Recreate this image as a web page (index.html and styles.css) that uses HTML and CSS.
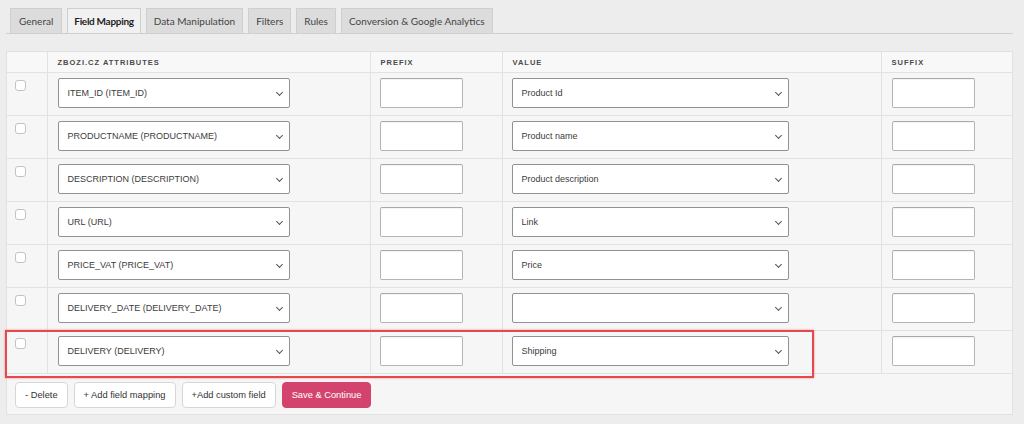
FILE: index.html
```html
<!DOCTYPE html>
<html lang="en">
<head>
    <meta charset="UTF-8">
    <meta name="viewport" content="width=device-width, initial-scale=1.0">
    <title>Field Mapping</title>
    <link rel="stylesheet" href="styles.css">
</head>
<body>

<div class="wrap">
    <!-- Tabs -->
    <ul class="tabs">
        <li class="first">General</li>
        <li class="active">Field Mapping</li>
        <li>Data Manipulation</li>
        <li>Filters</li>
        <li>Rules</li>
        <li>Conversion &amp; Google Analytics</li>
    </ul>

    <div class="panel">
        <table class="mapping">
            <colgroup>
                <col class="c-check">
                <col class="c-attr">
                <col class="c-prefix">
                <col class="c-value">
                <col>
            </colgroup>
            <thead>
                <tr>
                    <th></th>
                    <th>Zbozi.cz Attributes</th>
                    <th>Prefix</th>
                    <th>Value</th>
                    <th>Suffix</th>
                </tr>
            </thead>
            <tbody>
                <tr>
                    <td><input type="checkbox"></td>
                    <td><div class="select">ITEM_ID (ITEM_ID)</div></td>
                    <td><input type="text" class="small"></td>
                    <td><div class="select">Product Id</div></td>
                    <td><input type="text" class="small"></td>
                </tr>
                <tr>
                    <td><input type="checkbox"></td>
                    <td><div class="select">PRODUCTNAME (PRODUCTNAME)</div></td>
                    <td><input type="text" class="small"></td>
                    <td><div class="select">Product name</div></td>
                    <td><input type="text" class="small"></td>
                </tr>
                <tr>
                    <td><input type="checkbox"></td>
                    <td><div class="select">DESCRIPTION (DESCRIPTION)</div></td>
                    <td><input type="text" class="small"></td>
                    <td><div class="select">Product description</div></td>
                    <td><input type="text" class="small"></td>
                </tr>
                <tr>
                    <td><input type="checkbox"></td>
                    <td><div class="select">URL (URL)</div></td>
                    <td><input type="text" class="small"></td>
                    <td><div class="select">Link</div></td>
                    <td><input type="text" class="small"></td>
                </tr>
                <tr>
                    <td><input type="checkbox"></td>
                    <td><div class="select">PRICE_VAT (PRICE_VAT)</div></td>
                    <td><input type="text" class="small"></td>
                    <td><div class="select">Price</div></td>
                    <td><input type="text" class="small"></td>
                </tr>
                <tr>
                    <td><input type="checkbox"></td>
                    <td><div class="select">DELIVERY_DATE (DELIVERY_DATE)</div></td>
                    <td><input type="text" class="small"></td>
                    <td><div class="select"></div></td>
                    <td><input type="text" class="small"></td>
                </tr>
                <tr>
                    <td class="mark-cell"><input type="checkbox"><div class="highlight"></div></td>
                    <td><div class="select">DELIVERY (DELIVERY)</div></td>
                    <td><input type="text" class="small"></td>
                    <td><div class="select">Shipping</div></td>
                    <td><input type="text" class="small"></td>
                </tr>
            </tbody>
        </table>

        <!-- Buttons -->
        <div class="button-group">
            <button type="button">- Delete</button>
            <button type="button">+ Add field mapping</button>
            <button type="button">+Add custom field</button>
            <button type="button" class="primary">Save &amp; Continue</button>
        </div>
    </div>
</div>

</body>
</html>
```

FILE: styles.css
```css
body {
    margin: 0;
    background: #ededed;
    font-family: "Liberation Sans", Arial, sans-serif;
    color: #333;
}
.wrap {
    width: 1007px;
    margin-left: 6px;
    padding-top: 8px;
}
.tabs {
    list-style: none;
    margin: 0;
    padding: 0 0 0 4px;
    display: flex;
    gap: 5px;
    border-bottom: 1px solid #cfcfcf;
    font-family: Lato, "Open Sans", sans-serif;
}
.tabs li {
    height: 24px;
    line-height: 24px;
    padding: 0 7px;
    font-size: 10px;
    font-weight: 400;
    color: #444;
    background: #dcdcdc;
    border: 1px solid #cfcfcf;
    border-bottom: none;
}
.tabs li.first {
    padding: 0 8px;
}
.tabs li.active {
    background: #f1f1f1;
    color: #1e1e1e;
    font-weight: 700;
    letter-spacing: -0.3px;
    padding: 0 6px;
}
.panel {
    margin-top: 17px;
    background: #f6f6f6;
    border: 1px solid #e1e1e1;
    padding-bottom: 6px;
}
.mapping {
    width: 100%;
    border-collapse: collapse;
    table-layout: fixed;
}
.c-check { width: 40px; }
.c-attr { width: 323px; }
.c-prefix { width: 132px; }
.c-value { width: 379px; }
.mapping th {
    height: 20px;
    padding: 0 10px;
    text-align: left;
    font-size: 7.5px;
    font-weight: bold;
    letter-spacing: 1px;
    text-transform: uppercase;
    color: #4a4a4a;
    background: #f8f8f8;
    border-bottom: 1px solid #e2e2e2;
}
.mapping td {
    height: 30px;
    padding: 6px 10px 6px;
    border-bottom: 1px solid #e2e2e2;
    vertical-align: top;
}
.mapping th + th,
.mapping td + td {
    border-left: 1px solid #e2e2e2;
}
.mapping td:first-child {
    padding: 7px 0 0 8px;
}
input[type="checkbox"] {
    appearance: none;
    display: block;
    margin: 0;
    width: 11px;
    height: 11px;
    background: #fff;
    border: 1px solid #c3c3c3;
    border-radius: 3px;
}
.select {
    box-sizing: border-box;
    width: 232px;
    height: 30px;
    margin-top: -1px;
    padding: 0 24px 0 9px;
    line-height: 28px;
    font-size: 9px;
    color: #3c3c3c;
    background: #fff;
    border: 1px solid #8f9296;
    border-radius: 2px;
    position: relative;
    white-space: nowrap;
}
.mapping td:nth-child(4) .select {
    width: 277px;
    margin-left: -1px;
}
.select::after {
    content: "";
    position: absolute;
    right: 7px;
    top: 11px;
    width: 4px;
    height: 4px;
    border-right: 1px solid #555;
    border-bottom: 1px solid #555;
    transform: rotate(45deg);
}
input.small {
    box-sizing: border-box;
    display: block;
    width: 83px;
    height: 30px;
    margin: -1px 0 0 -1px;
    background: #fff;
    border: 1px solid #b4b4b4;
    border-top-color: #a9a9a9;
    border-radius: 2px;
    box-shadow: inset 0 1px 1px rgba(0, 0, 0, 0.05);
}
.mapping td:last-child input.small {
    margin-left: 0;
}
.mark-cell {
    position: relative;
}
.highlight {
    position: absolute;
    left: -2px;
    top: -1px;
    width: 805px;
    height: 44px;
    border: 2px solid #e5484d;
    box-shadow: 0 0 2px rgba(229, 72, 77, 0.6);
    pointer-events: none;
}
.button-group {
    display: flex;
    gap: 6px;
    padding: 8px 0 0 8px;
}
button {
    height: 26px;
    padding: 0 9px;
    font-family: "Liberation Sans", Arial, sans-serif;
    font-size: 9.3px;
    color: #333;
    background: #fff;
    border: 1px solid #d6d6d6;
    border-radius: 4px;
    cursor: pointer;
}
button.primary {
    color: #fff;
    background: #d3436d;
    border-color: #d3436d;
}
```
